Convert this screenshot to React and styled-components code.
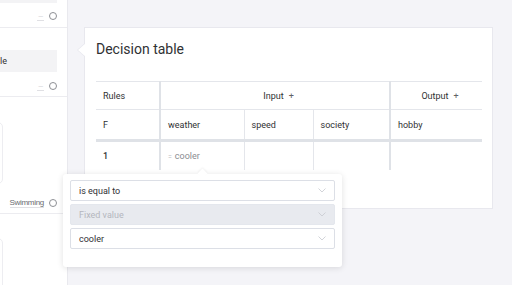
import React from 'react';
import styled, { createGlobalStyle } from 'styled-components';

const GlobalStyle = createGlobalStyle`
  html, body {
    margin: 0;
    padding: 0;
    background: #f4f4f8;
    font-family: Roboto, "Liberation Sans", Arial, sans-serif;
    color: #303133;
    -webkit-font-smoothing: antialiased;
  }
  #root {
    width: 512px;
    height: 285px;
    overflow: hidden;
  }
`;

const Page = styled.div`
  position: relative;
  display: flex;
  width: 512px;
  height: 285px;
  overflow: hidden;
`;

/* left node list, scrolled so only the right edge shows */
const Sidebar = styled.div`
  width: 67px;
  flex-shrink: 0;
  background: #fff;
  border-right: 1px solid #e9e9ee;
  overflow: hidden;
  display: flex;
  flex-direction: column;
`;

const Section = styled.div`
  height: ${(p) => p.h}px;
  flex-shrink: 0;
  border-bottom: 1px solid #ececf0;
  display: flex;
  flex-direction: column;
  padding-top: ${(p) => p.top || 0}px;
  box-sizing: border-box;
`;

const OptionBox = styled.div`
  width: 57px;
  height: ${(p) => p.h}px;
  margin-top: ${(p) => p.mt || 0}px;
  background: #f3f3f5;
  display: flex;
  align-items: center;
  box-sizing: border-box;
  white-space: nowrap;
  font-size: 9px;
  color: #303133;
`;

const NodeCard = styled.div`
  width: 60px;
  height: ${(p) => p.h}px;
  margin-left: -57px;
  border: 1px solid #ededf1;
  border-radius: 5px;
  box-sizing: border-box;
  flex-shrink: 0;
`;

const Footer = styled.div`
  display: flex;
  justify-content: flex-end;
  align-items: center;
  gap: 5px;
  padding-right: 10px;
  margin-top: ${(p) => p.mt}px;
  height: 10px;
`;

const Label = styled.span`
  font-family: "Liberation Sans", Arial, sans-serif;
  font-size: 8px;
  letter-spacing: -0.3px;
  line-height: 9px;
  color: ${(p) => (p.empty ? '#d0d0d4' : '#6a6c70')};
  border-bottom: 1px solid #e0e0e4;
  min-width: 7px;
  text-align: center;
`;

const Radio = styled.span`
  width: 6px;
  height: 6px;
  border: 1px solid #8d8f94;
  border-radius: 50%;
`;

const Main = styled.div`
  flex: 1;
  padding: 27px 0 0 16px;
`;

const Card = styled.div`
  position: relative;
  width: 409px;
  height: 182px;
  box-sizing: border-box;
  background: #fff;
  border: 1px solid #e8e8ee;
  padding: 11px 11px 0 11px;

  &::before {
    content: '';
    position: absolute;
    left: -8px;
    top: 15px;
    border-style: solid;
    border-width: 7px 8px 7px 0;
    border-color: transparent #e8e8ee transparent transparent;
  }
  &::after {
    content: '';
    position: absolute;
    left: -7px;
    top: 15px;
    border-style: solid;
    border-width: 7px 8px 7px 0;
    border-color: transparent #fff transparent transparent;
  }
`;

const Title = styled.h2`
  margin: 0;
  font-size: 14px;
  font-weight: 400;
  line-height: 20px;
  color: #303133;
`;

const Table = styled.table`
  margin-top: 22px;
  width: 386px;
  border-collapse: collapse;
  table-layout: fixed;
  font-size: 9px;
  color: #303133;
`;

const Cell = styled.td`
  height: ${(p) => p.h || 27}px;
  padding: 0 0 0 7px;
  text-align: ${(p) => (p.center ? 'center' : 'left')};
  font-weight: ${(p) => (p.bold ? 500 : 400)};
  border-top: 1px solid #e4e6eb;
  border-bottom: ${(p) => (p.thick ? '3px solid #dfe2e7' : 'none')};
  border-left: ${(p) => (p.thickLeft ? '2px solid #dfe2e7' : p.first ? 'none' : '1px solid #e4e6eb')};
  white-space: nowrap;
  box-sizing: border-box;
`;

const Plus = styled.span`
  margin-left: 5px;
  color: #606266;
`;

const Eq = styled.span`
  color: #b9bbc0;
  font-size: 7px;
  margin-right: 3px;
`;

const Muted = styled.span`
  color: #8a8c91;
`;

const Popup = styled.div`
  position: absolute;
  left: 63px;
  top: 174px;
  width: 279px;
  height: 93px;
  box-sizing: border-box;
  background: #fff;
  border-radius: 3px;
  box-shadow: 0 1px 6px rgba(0, 0, 0, 0.12);
  padding: 6px 7px;
  display: flex;
  flex-direction: column;
  gap: 3px;

  &::before {
    content: '';
    position: absolute;
    left: 136px;
    top: -4px;
    width: 7px;
    height: 7px;
    background: #fff;
    transform: rotate(45deg);
    box-shadow: -1px -1px 2px rgba(0, 0, 0, 0.05);
  }
`;

const Select = styled.div`
  position: relative;
  height: 21px;
  box-sizing: border-box;
  border: 1px solid ${(p) => (p.disabled ? '#e4e7ed' : '#dcdfe6')};
  background: ${(p) => (p.disabled ? '#e8eaef' : '#fff')};
  color: ${(p) => (p.disabled ? '#b4b7be' : '#303133')};
  border-radius: 2px;
  font-size: 9px;
  display: flex;
  align-items: center;
  justify-content: space-between;
  padding: 0 8px 0 8px;
`;

const Chevron = () => (
  <svg width="8" height="5" viewBox="0 0 8 5">
    <path d="M0.5 0.5 L4 4 L7.5 0.5" fill="none" stroke="#c6c9cf" strokeWidth="0.8" />
  </svg>
);

export default function App() {
  return (
    <Page>
      <GlobalStyle />
      <Sidebar>
        <Section h={28}>
          <OptionBox h={23} mt={-20} />
          <Footer mt={8}>
            <Label empty>–</Label>
            <Radio />
          </Footer>
        </Section>
        <Section h={69} top={22}>
          <OptionBox h={22}>le</OptionBox>
          <Footer mt={9}>
            <Label empty>–</Label>
            <Radio />
          </Footer>
        </Section>
        <Section h={117} top={25}>
          <NodeCard h={62} />
          <Footer mt={14}>
            <Label>Swimming</Label>
            <Radio />
          </Footer>
        </Section>
        <Section h={80} top={24}>
          <NodeCard h={80} />
        </Section>
      </Sidebar>
      <Main>
        <Card>
          <Title>Decision table</Title>
          <Table>
            <colgroup>
              <col style={{ width: 64 }} />
              <col style={{ width: 84 }} />
              <col style={{ width: 69 }} />
              <col style={{ width: 77 }} />
              <col />
            </colgroup>
            <tbody>
              <tr>
                <Cell first h={28}>Rules</Cell>
                <Cell thickLeft colSpan={3} center>
                  Input<Plus>+</Plus>
                </Cell>
                <Cell thickLeft center>
                  Output<Plus>+</Plus>
                </Cell>
              </tr>
              <tr>
                <Cell first thick h={31}>F</Cell>
                <Cell thick thickLeft>weather</Cell>
                <Cell thick>speed</Cell>
                <Cell thick>society</Cell>
                <Cell thick thickLeft>hobby</Cell>
              </tr>
              <tr>
                <Cell first bold h={29}>1</Cell>
                <Cell thickLeft>
                  <Eq>=</Eq>
                  <Muted>cooler</Muted>
                </Cell>
                <Cell />
                <Cell />
                <Cell thickLeft />
              </tr>
            </tbody>
          </Table>
        </Card>
      </Main>
      <Popup>
        <Select>
          is equal to
          <Chevron />
        </Select>
        <Select disabled>
          Fixed value
          <Chevron />
        </Select>
        <Select>
          cooler
          <Chevron />
        </Select>
      </Popup>
    </Page>
  );
}
